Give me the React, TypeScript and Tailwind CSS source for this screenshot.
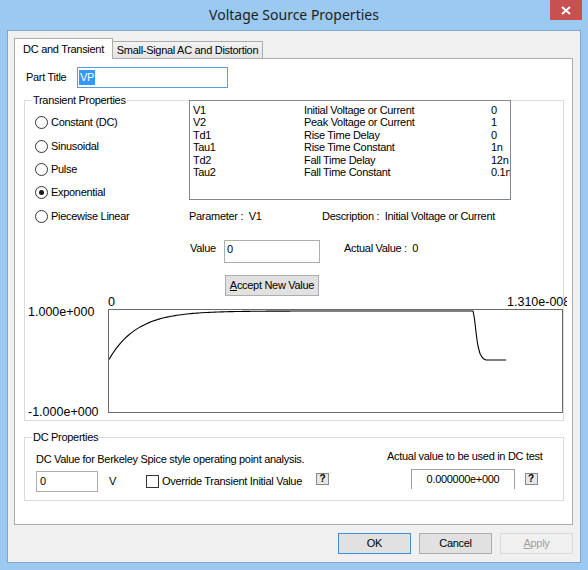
import React from "react";

const radios = [
  { label: "Constant (DC)", checked: false },
  { label: "Sinusoidal", checked: false },
  { label: "Pulse", checked: false },
  { label: "Exponential", checked: true },
  { label: "Piecewise Linear", checked: false },
];

const params = [
  ["V1", "Initial Voltage or Current", "0"],
  ["V2", "Peak Voltage or Current", "1"],
  ["Td1", "Rise Time Delay", "0"],
  ["Tau1", "Rise Time Constant", "1n"],
  ["Td2", "Fall Time Delay", "12n"],
  ["Tau2", "Fall Time Constant", "0.1n"],
];

// exponential waveform, in plot pixels (0..453 x 0..102)
function wavePath() {
  const pts: string[] = [];
  for (let x = 0; x <= 364; x += 2) {
    const y = 49.5 - 48.5 * (1 - Math.exp(-x / 28));
    pts.push(`${x},${y.toFixed(2)}`);
  }
  const fall = [
    [365, 6], [366, 13], [367, 22], [368, 30], [369, 36], [370, 40],
    [371, 43.5], [372.7, 46.7], [374.5, 48.7], [377, 50], [397, 50],
  ];
  fall.forEach(([x, y]) => pts.push(`${x},${y}`));
  return "M" + pts.join(" L");
}

function Radio({ label, checked }: { label: string; checked: boolean }) {
  return (
    <div className="flex items-center h-[23.4px]">
      <span className="w-[13px] h-[13px] rounded-full border border-[#333] bg-white flex items-center justify-center">
        {checked && <span className="w-[5px] h-[5px] rounded-full bg-[#1a1a1a]" />}
      </span>
      <span className="ml-[3px]">{label}</span>
    </div>
  );
}

function HelpButton() {
  return (
    <span className="w-[13px] h-[12px] border border-[#8a8a8a] bg-[#e6e6e6] flex items-center justify-center text-[10px] leading-[10px] font-bold tracking-normal">
      ?
    </span>
  );
}

function GroupBox({
  title,
  className,
  children,
}: {
  title: string;
  className: string;
  children: React.ReactNode;
}) {
  return (
    <div className={`relative ml-[9px] w-[540px] border border-[#dcdcdc] ${className}`}>
      <span className="absolute left-[7px] top-[-7px] bg-white px-[1px] leading-[13px]">{title}</span>
      {children}
    </div>
  );
}

export default function App() {
  const btn = "w-[73px] h-[21px] flex items-center justify-center border";
  return (
    <div className="w-[588px] h-[570px] bg-[#9bc9f0] flex flex-col font-['Liberation_Sans',Arial,sans-serif] text-[11px] leading-[13px] tracking-[-0.3px] text-black">
      {/* title bar */}
      <div className="relative h-[30px] flex items-center justify-center">
        <span className="font-['Noto_Sans',sans-serif] text-[14px] tracking-normal text-[#1e1e1e] -mt-[1px]">
          Voltage Source Properties
        </span>
        <div className="absolute top-0 left-[550px] w-[32px] h-[20px] bg-[#c75050] flex items-center justify-center">
          <svg width="10" height="9" viewBox="0 0 10 9">
            <path d="M1 1 L9 8 M9 1 L1 8" stroke="white" strokeWidth="2" />
          </svg>
        </div>
      </div>

      {/* client area */}
      <div className="mx-[7px] mb-[7px] flex-1 border border-[#7fa6cc] bg-[#f0f0f0] flex flex-col pl-[6px] pt-[7px]">
        {/* tabs */}
        <div className="flex items-end h-[21px] -mb-px relative z-10">
          <div className="w-[99px] h-[21px] bg-white border border-b-0 border-[#acacac] flex items-center justify-center">
            DC and Transient
          </div>
          <div className="w-[150px] h-[18px] bg-gradient-to-b from-[#f3f3f3] to-[#e4e4e4] border border-l-0 border-[#acacac] flex items-center justify-center">
            Small-Signal AC and Distortion
          </div>
        </div>

        {/* tab page */}
        <div className="w-[559px] h-[467px] border border-[#acacac] bg-white">
          <div className="mt-[8px] pl-[11px] flex items-center h-[21px]">
            <span className="w-[51px]">Part Title</span>
            <div className="w-[151px] h-[21px] border border-[#569de5] flex items-center pl-[1px]">
              <span className="bg-[#3399ff] text-white px-[1px] leading-[15px]">VP</span>
            </div>
          </div>

          <GroupBox title="Transient Properties" className="mt-[12px] h-[321px]">
            <div className="flex h-[195px]">
              <div className="w-[164px] pl-[10px] pt-[10px]">
                {radios.map((r) => (
                  <Radio key={r.label} label={r.label} checked={r.checked} />
                ))}
              </div>
              <div className="flex flex-col">
                <div className="-mt-px w-[322px] h-[104px] border border-[#828790] pt-[3px] pl-[3px] overflow-hidden">
                  {params.map(([name, desc, val]) => (
                    <div key={name} className="flex leading-[12.4px] whitespace-nowrap">
                      <span className="w-[111px] shrink-0">{name}</span>
                      <span className="w-[187px] shrink-0">{desc}</span>
                      <span>{val}</span>
                    </div>
                  ))}
                </div>
                <div className="mt-[10px] flex whitespace-pre">
                  <span className="w-[133px]">Parameter :  V1</span>
                  <span>Description :  Initial Voltage or Current</span>
                </div>
                <div className="mt-[17px] flex items-start whitespace-pre">
                  <span className="ml-[1px] w-[34px] mt-[2.5px]">Value</span>
                  <div className="w-[96px] h-[23px] border border-[#abadb3] pl-[2px] pt-[2.5px]">0</div>
                  <span className="ml-[24px] mt-[2.5px]">Actual Value :  0</span>
                </div>
                <div className="mt-[12px] ml-[36px] w-[94px] h-[22px] border border-[#adadad] bg-[#e1e1e1] flex items-center justify-center">
                  <span>
                    <u>A</u>ccept New Value
                  </span>
                </div>
              </div>
            </div>

            {/* waveform */}
            <div className="flex h-[123px] text-[12.5px] tracking-normal">
              <div className="w-[84px] pl-[3px] flex flex-col">
                <span className="pt-[10px]">1.000e+000</span>
                <span className="mt-auto">-1.000e+000</span>
              </div>
              <div className="w-[455px] flex flex-col">
                <div className="h-[13px] w-[459px] flex overflow-hidden whitespace-nowrap">
                  <span className="w-[399px] shrink-0">0</span>
                  <span>1.310e-008</span>
                </div>
                <div className="h-[104px] border border-[#6b6b6b] bg-white">
                  <svg className="block" width="453" height="102" viewBox="0 0 453 102">
                    <path d={wavePath()} fill="none" stroke="black" strokeWidth="1.1" />
                  </svg>
                </div>
              </div>
            </div>
          </GroupBox>

          <GroupBox title="DC Properties" className="mt-[16px] h-[64px] flex">
            <div className="w-[362px] pl-[11px] pt-[14.5px]">
              <div>DC Value for Berkeley Spice style operating point analysis.</div>
              <div className="mt-[5.5px] flex items-center h-[21px]">
                <div className="w-[62px] h-[21px] border border-[#abadb3] flex items-center pl-[3px]">0</div>
                <span className="ml-[11px] w-[37px]">V</span>
                <span className="w-[13px] h-[13px] border border-[#333] bg-white" />
                <span className="ml-[3px] w-[154px]">Override Transient Initial Value</span>
                <div className="self-start mt-[2px]">
                  <HelpButton />
                </div>
              </div>
            </div>
            <div className="pt-[12px]">
              <div>Actual value to be used in DC test</div>
              <div className="mt-[5.5px] flex items-start">
                <div className="ml-[24px] w-[104px] h-[20px] border-t border-l border-r border-[#a0a0a0] flex items-center justify-center">
                  0.000000e+000
                </div>
                <div className="ml-[9.5px] mt-[4.5px]">
                  <HelpButton />
                </div>
              </div>
            </div>
          </GroupBox>
        </div>

        {/* dialog buttons */}
        <div className="mt-[8px] w-[559px] flex justify-end gap-[8px]">
          <div className={`${btn} border-[#3c8ee0] bg-[#e1e1e1]`}>OK</div>
          <div className={`${btn} border-[#adadad] bg-[#e1e1e1]`}>Cancel</div>
          <div className={`${btn} border-[#d9d9d9] bg-[#f0f0f0] text-[#a0a0a0]`}>
            <span>
              <u>A</u>pply
            </span>
          </div>
        </div>
      </div>
    </div>
  );
}
